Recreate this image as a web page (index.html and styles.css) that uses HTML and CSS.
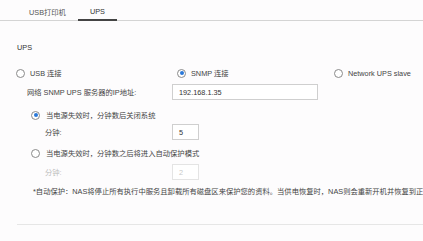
FILE: index.html
```html
<!DOCTYPE html>
<html lang="zh-CN">
<head>
<meta charset="utf-8">
<title>UPS</title>
<link rel="stylesheet" href="styles.css">
</head>
<body>
<div class="tabs">
  <div class="tab">USB打印机</div>
  <div class="tab active">UPS</div>
</div>
<div class="content">
  <div class="heading">UPS</div>
  <div class="modes">
    <label class="opt"><span class="radio"></span><span>USB 连接</span></label>
    <label class="opt"><span class="radio on"></span><span>SNMP 连接</span></label>
    <label class="opt"><span class="radio"></span><span>Network UPS slave</span></label>
  </div>
  <div class="field ip">
    <span class="flabel">网络 SNMP UPS 服务器的IP地址:</span>
    <span class="input wide">192.168.1.35</span>
  </div>
  <label class="opt sub r1"><span class="radio on"></span><span>当电源失效时，分钟数后关闭系统</span></label>
  <div class="field mins m1">
    <span class="flabel">分钟:</span>
    <span class="input small">5</span>
  </div>
  <label class="opt sub r2"><span class="radio"></span><span>当电源失效时，分钟数之后将进入自动保护模式</span></label>
  <div class="field mins m2 disabled">
    <span class="flabel">分钟:</span>
    <span class="input small">2</span>
  </div>
  <div class="note">*自动保护：NAS将停止所有执行中服务且卸载所有磁盘区来保护您的资料。当供电恢复时，NAS则会重新开机并恢复到正常状态。</div>
  <div class="rule"></div>
</div>
</body>
</html>
```
FILE: styles.css
```css
html, body {
  margin: 0;
  padding: 0;
  background: #fdfcfd;
  overflow: hidden;
}
body {
  width: 423px;
  height: 241px;
  font-family: "Liberation Sans", "Noto Sans CJK SC", sans-serif;
  font-size: 7.3px;
  color: #444;
}
.tabs {
  display: flex;
  height: 20px;
  padding-left: 17px;
  border-bottom: 1px solid #d4d4d4;
}
.tab {
  box-sizing: border-box;
  height: 21px;
  margin-bottom: -1px;
  padding: 2px 12px 0;
  display: flex;
  align-items: center;
  color: #555;
}
.tab.active {
  color: #333;
  box-shadow: inset 0 -2px 0 #444;
}
.content {
  padding-left: 17px;
  display: flex;
  flex-direction: column;
}
.heading {
  margin-top: 21px;
  height: 12px;
  line-height: 12px;
  color: #333;
}
.modes {
  margin-top: 13px;
  display: grid;
  grid-template-columns: 161px 157px 100px;
  margin-left: -1px;
}
.opt {
  display: flex;
  align-items: center;
  height: 12px;
  white-space: nowrap;
}
.radio {
  box-sizing: border-box;
  width: 9px;
  height: 9px;
  border: 1px solid #8a8a8a;
  border-radius: 50%;
  margin-right: 5px;
  background: #fff;
  display: flex;
  align-items: center;
  justify-content: center;
  flex: none;
}
.radio.on::after {
  content: "";
  width: 4px;
  height: 4px;
  border-radius: 50%;
  background: #2a78d8;
}
.field {
  display: flex;
  align-items: center;
  white-space: nowrap;
}
.flabel {
  flex: none;
}
.ip {
  margin-top: 5px;
  padding-left: 10px;
}
.ip .flabel {
  width: 145px;
}
.input {
  box-sizing: border-box;
  height: 16px;
  border: 1px solid #cfcfcf;
  background: #fff;
  padding-left: 6px;
  display: flex;
  align-items: center;
  color: #333;
}
.input.wide {
  width: 146px;
}
.input.small {
  width: 27px;
}
.sub {
  padding-left: 14px;
}
.sub .radio {
  margin-right: 6px;
}
.r1 {
  margin-top: 9px;
}
.mins {
  padding-left: 28px;
}
.mins .flabel {
  width: 127px;
}
.m1 {
  margin-top: 3px;
}
.r2 {
  margin-top: 7px;
}
.m2 {
  margin-top: 5px;
}
.disabled .flabel {
  color: #bbb;
}
.disabled .input {
  border-color: #e4e4e4;
  color: #c8c8c8;
}
.note {
  margin-top: 6px;
  padding-left: 16px;
  height: 12px;
  line-height: 12px;
  white-space: nowrap;
  overflow: hidden;
}
.rule {
  margin-top: 26px;
  height: 1px;
  background: #e6e6e6;
}
```
